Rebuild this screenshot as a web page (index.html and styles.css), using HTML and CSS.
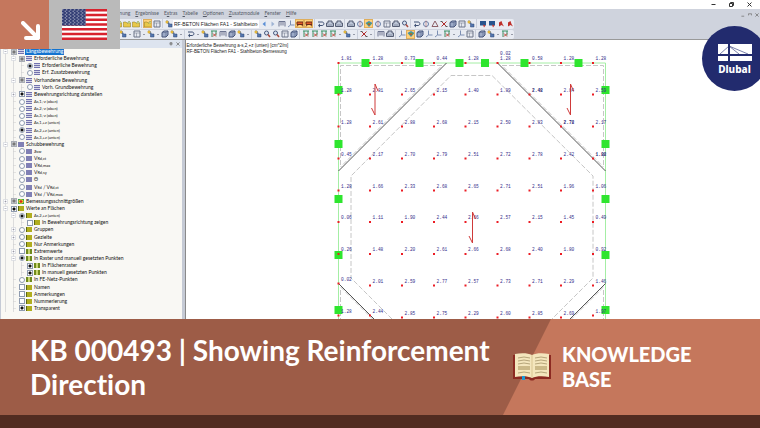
FILE: index.html
```
<!DOCTYPE html>
<html lang="en">
<head>
    <meta charset="UTF-8">
    <meta name="viewport" content="width=device-width, initial-scale=1.0">
    <title>KB 000493 | Showing Reinforcement Direction</title>
    <link rel="stylesheet" href="styles.css">
</head>
<body>
    <svg class="sprite" width="0" height="0" aria-hidden="true">
        <symbol id="folder" viewBox="0 0 16 16"><path d="M1 4h5l2 2h7v8H1z" fill="#e8c84a" stroke="#8a7420"/><path d="M9 7l3-5 3 4" fill="#cfe0a0" stroke="#7b8c30"/></symbol>
        <symbol id="sheet" viewBox="0 0 16 16"><path d="M2 2h12v12H2z" fill="#e6e9f0" stroke="#6c7488" stroke-width="2"/><path d="M2 6h12M7 6v8" stroke="#6c7488"/></symbol>
        <symbol id="cube" viewBox="0 0 16 16"><path d="M2 5l4-3h8v8l-4 4H2z" fill="#9dabc8" stroke="#46547a" stroke-width="2"/><path d="M2 5h8v9M10 5l4-3" fill="none" stroke="#46547a"/></symbol>
        <symbol id="node" viewBox="0 0 16 16"><path d="M2 2h4l3 6h5v6H7V9z" fill="#5477b0" stroke="#2d4573"/><circle cx="4" cy="4" r="3" fill="#e3b63a"/></symbol>
        <symbol id="load" viewBox="0 0 16 16"><path d="M2 13V3h12v10M6 3v8M10 3v8" fill="none" stroke="#6e7590" stroke-width="2"/></symbol>
        <symbol id="rod" viewBox="0 0 16 16"><path d="M2 4h8c5 0 5 7 0 7H4" fill="none" stroke="#3e5074" stroke-width="2"/><path d="M6 7l-4 4 4 4" fill="#3e5074"/></symbol>
        <symbol id="lens" viewBox="0 0 16 16"><circle cx="7" cy="6" r="4" fill="#dce5f2" stroke="#48587c" stroke-width="2"/><path d="M10 9l4 5" stroke="#a8483c" stroke-width="3"/></symbol>
        <symbol id="bars" viewBox="0 0 16 16"><path d="M2 2h12M4 2v12M12 2v9" stroke="#3c9166" stroke-width="2"/><path d="M6 7l6 6M12 7l-6 6" stroke="#c24436" stroke-width="2"/></symbol>
        <symbol id="cross" viewBox="0 0 16 16"><path d="M3 3l10 10M13 3L3 13" stroke="#b02c2c" stroke-width="2"/><path d="M1 3h4M11 13h4" stroke="#555" stroke-width="2"/></symbol>
        <symbol id="axis" viewBox="0 0 16 16"><path d="M7 1v9h8M7 10l-5 4" fill="none" stroke="#7c8fb3" stroke-width="2"/></symbol>
        <symbol id="print" viewBox="0 0 16 16"><path d="M4 2h8v4h3v7H1V6h3z" fill="#bcc5d6" stroke="#565e74" stroke-width="2"/><path d="M3 10h10" stroke="#565e74"/></symbol>
        <symbol id="truss" viewBox="0 0 16 16"><path d="M2 4h12v5H2zM5 9l-3 4M11 9l3 4" fill="#e05a28" stroke="#6b2a18" stroke-width="2"/></symbol>
        <symbol id="rainbow" viewBox="0 0 16 16"><path d="M1 6l7-4 7 4-7 8z" fill="#3d7fd0"/><path d="M3 7l5-3 5 3-5 5z" fill="#52b94d"/><path d="M5 7h6l-3 4z" fill="#d8382c"/></symbol>
        <symbol id="doc" viewBox="0 0 16 16"><path d="M2 2h12v9H2z" fill="#27548e"/><path d="M8 9l5 2-3 4z" fill="#c8362c"/></symbol>
        <symbol id="pdf" viewBox="0 0 16 16"><path d="M4 13V5l5-3 2 6 3 5-5-3z" fill="#bf2f2a"/></symbol>
        <symbol id="ring" viewBox="0 0 16 16"><circle cx="8" cy="8" r="5" fill="none" stroke="#6a80a8" stroke-width="2"/><path d="M8 1v14" stroke="#b8574c"/></symbol>
        <symbol id="prev" viewBox="0 0 16 16"><path d="M11 3L5 8l6 5z" fill="#5b8fd6"/></symbol>
        <symbol id="next" viewBox="0 0 16 16"><path d="M5 3l6 5-6 5z" fill="#9fb4d4"/></symbol>
        <symbol id="tri" viewBox="0 0 16 16"><path d="M8 2l6 11H2z" fill="none" stroke="#8c5f66" stroke-width="2"/></symbol>
        <symbol id="drop" viewBox="0 0 8 16"><path d="M2 8h4L4 10z" fill="#444b5c"/></symbol>
    </svg>

    <main class="app">
        <header class="title-bar">
            <button class="win-btn" aria-label="Minimize"><svg viewBox="0 0 10 10"><path d="M1 5h8"/></svg></button>
            <button class="win-btn" aria-label="Restore"><svg viewBox="0 0 10 10"><path d="M1 3h6v6H1zM3 3V1h6v6H7"/></svg></button>
            <button class="win-btn" aria-label="Close"><svg viewBox="0 0 10 10"><path d="M1 1l8 8M9 1L1 9"/></svg></button>
        </header>
        <nav class="menu-bar">
            <a href="#">Berechnung</a>
            <a href="#"><u>E</u>rgebnisse</a>
            <a href="#">E<u>x</u>tras</a>
            <a href="#"><u>T</u>abelle</a>
            <a href="#"><u>O</u>ptionen</a>
            <a href="#"><u>Z</u>usatzmodule</a>
            <a href="#"><u>F</u>enster</a>
            <a href="#"><u>H</u>ilfe</a>
            <span class="doc-controls">
                <button class="doc-btn" aria-label="Minimize document"><svg viewBox="0 0 10 10"><path d="M1 8h7"/></svg></button>
                <button class="doc-btn" aria-label="Restore document"><svg viewBox="0 0 10 10"><path d="M1 6V2h8v4"/></svg></button>
                <button class="doc-btn" aria-label="Close document"><svg viewBox="0 0 10 10"><path d="M1 1l8 8M9 1L1 9"/></svg></button>
            </span>
        </nav>
        <div class="toolbars">
            <div class="toolbar" id="toolbar-main"></div>
            <div class="toolbar" id="toolbar-view"></div>
        </div>

        <div class="workspace">
            <aside class="navigator">
                <div class="navigator-head">
                    <button class="pane-btn" aria-label="Pin"><svg viewBox="0 0 10 10"><path d="M3 1h4v4H3zM1 5h8M5 5v4"/></svg></button>
                    <button class="pane-btn" aria-label="Close pane"><svg viewBox="0 0 10 10"><path d="M1 1l8 8M9 1L1 9"/></svg></button>
                </div>
                <div class="tree" id="tree"></div>
            </aside>
            <section class="view">
                <svg class="plot" id="plot" viewBox="0 0 1148 558" preserveAspectRatio="xMidYMin slice">
                    <text class="caption" x="1" y="13">Erforderliche Bewehrung a-s,2,+z (unten) [cm^2/m]</text>
                    <text class="caption" x="1" y="25">RF-BETON Flächen FA1 - Stahlbeton-Bemessung</text>
                    <path class="edge" d="M305 558V46H839V558"/>
                    <path class="dashed" d="M309 250V51H512L309 254M835 250V51H632L835 254M309 500V558M835 500V558M309 494L373 558M835 494L771 558"/>
                    <path class="dashed" d="M412 558L330 476V272L530 71H612L814 272V476L732 558"/>
                    <path class="joint" d="M521 46L305 262M623 46L839 262M305 487L376 558M839 487L768 558"/>
                    <g id="supports"></g>
                    <g id="values"></g>
                    <path class="direction" d="M378 150V88L384 102M378 150L371 136M769 150V88L775 102M769 150L762 136M573 406V344L579 358M573 406L566 392"/>
                </svg>
            </section>
        </div>

        <div class="tags">
            <div class="tag-arrow">
                <svg viewBox="0 0 20 20"><path d="M2 2L17 17M17 5V17H5"/></svg>
            </div>
            <div class="tag-flag">
                <svg viewBox="0 0 57 39" preserveAspectRatio="none">
                    <defs><pattern id="stars" width="5" height="4" patternUnits="userSpaceOnUse"><circle cx="1" cy="1" r="0.7" fill="#fff"/><circle cx="4" cy="3" r="0.7" fill="#fff"/></pattern></defs>
                    <path d="M0 0h57v39H0z" fill="#fff"/>
                    <path d="M0 0h57v3H0zM0 6h57v3H0zM0 12h57v3H0zM0 18h57v3H0zM0 24h57v3H0zM0 30h57v3H0zM0 36h57v3H0z" fill="#d8222e"/>
                    <path d="M0 0h30v21H0z" fill="#2f3a72"/>
                    <path d="M0 0h30v21H0z" fill="url(#stars)"/>
                </svg>
            </div>
        </div>

        <div class="logo">
            <svg viewBox="0 0 34 17">
                <path d="M0 0h34v17H0z" fill="#fff"/>
                <path d="M0 11h34M11 0v17" stroke="#222b6e" stroke-width="2"/>
                <path d="M11 2L2 10M11 2l10 8M11 2l19 8" fill="none" stroke="#222b6e" stroke-width="0.6"/>
            </svg>
            <span>Dlubal</span>
        </div>
    </main>

    <footer class="banner">
        <h1>KB 000493 | Showing Reinforcement Direction</h1>
        <div class="category">
            <svg class="book" viewBox="0 0 38 28">
                <path d="M0 2h38v24H22c-1 2-5 2-6 0H0z" fill="#8c2a22"/>
                <path d="M2 1c6-1 13-1 17 1 4-2 11-2 17-1v23c-6-1-13-1-17 1-4-2-11-2-17-1z" fill="#f4e6bd"/>
                <path d="M19 2v22" stroke="#d9c592"/>
                <path d="M5 5q6-2 12 0M5 8q6-2 12 0M5 11q6-2 12 0M5 20q6-2 12 0M22 5q6-2 12 0M22 8q6-2 12 0M22 11q6-2 12 0M22 20q6-2 12 0" fill="none" stroke="#b5a57a"/>
                <path d="M5 13h12v4H5zM22 13h12v4H22z" fill="#cbb988"/>
                <path d="M9 23h3v4H9z" fill="#1b9ad6"/>
            </svg>
            <p>KNOWLEDGE BASE</p>
        </div>
    </footer>
    <div class="base-strip"></div>

    <script src="script.js"></script>
</body>
</html>
```
FILE: styles.css
```
* {
    box-sizing: border-box;
}
body {
    margin: 0;
    min-height: 100vh;
    display: flex;
    flex-direction: column;
    font-family: "Liberation Sans", Arial, sans-serif;
    overflow: hidden;
}
button {
    border: 0;
    padding: 0;
    background: none;
    display: flex;
    align-items: center;
    justify-content: center;
}
.sprite {
    position: absolute;
}
.app {
    flex: 1;
    display: flex;
    flex-direction: column;
    position: relative;
    background: #fff;
}

/* window frame */
.title-bar {
    height: 9px;
    display: flex;
    justify-content: flex-end;
    align-items: center;
    gap: 13px;
    padding-right: 8px;
}
.win-btn svg, .doc-btn svg, .pane-btn svg {
    display: block;
    width: 5px;
    height: 5px;
    fill: none;
    stroke: #333;
    stroke-width: 2;
}
.doc-btn svg, .pane-btn svg {
    width: 4px;
    height: 4px;
    stroke: #777;
}
.menu-bar {
    height: 9px;
    display: flex;
    align-items: center;
    gap: 5px;
    padding-left: 104px;
    background: #cfd3dd;
    font-family: Lato, sans-serif;
    font-size: 5px;
    line-height: 9px;
}
.menu-bar a {
    color: #555a66;
    text-decoration: none;
}
.doc-controls {
    margin-left: auto;
    display: flex;
    gap: 3px;
    padding: 3px 1px 0 0;
}

/* toolbars */
.toolbars {
    display: flex;
    flex-direction: column;
    align-items: flex-start;
    gap: 1px;
    height: 22px;
    padding-top: 1px;
    background: #cfd3dd;
    border-bottom: 1px solid #999;
}
.toolbar {
    height: 10px;
    display: flex;
    align-items: center;
    background: #e8ebf2;
    border-radius: 0 2px 2px 0;
    padding-left: 113px;
}
#toolbar-view {
    padding-left: 118px;
}
.tool-group {
    display: flex;
    align-items: center;
}
.tool-group + .tool-group {
    border-left: 1px solid #c9ceda;
    margin-left: 1px;
    padding-left: 1px;
}
.tool {
    width: 9px;
    height: 9px;
}
.tool svg {
    width: 8px;
    height: 8px;
}
.tool.active {
    background: #ffd27a;
    outline: 1px solid #dfae5c;
    outline-offset: -1px;
}
.tool.drop {
    width: 5px;
}
.tool.drop svg {
    width: 4px;
}
.case-select {
    appearance: none;
    width: 86px;
    height: 8px;
    border: 0;
    border-radius: 0;
    padding: 0 1px;
    background: #fff;
    font-family: "Liberation Sans", Arial, sans-serif;
    font-size: 5px;
    color: #222;
}

/* navigator pane */
.workspace {
    flex: 1;
    display: flex;
}
.navigator {
    width: 185px;
    display: flex;
    flex-direction: column;
    border-right: 3px solid #c5cad5;
    border-left: 1px solid #c5cad5;
    background: #f9f8f4;
}
.navigator-head {
    height: 8px;
    display: flex;
    align-items: center;
    justify-content: flex-end;
    gap: 3px;
    padding-right: 2px;
    background: #dde4ef;
}
.tree {
    flex: 1;
    display: grid;
    grid-auto-rows: 1fr;
    padding-bottom: 7px;
}
.row {
    display: flex;
    align-items: center;
    min-height: 0;
    line-height: 7px;
    font-family: Lato, sans-serif;
    font-size: 5px;
    color: #111;
    background: repeating-linear-gradient(90deg, transparent 0 4px, #dcdcdc 4px 5px, transparent 5px 8px) no-repeat;
}
.level-0 {
    padding-left: 2px;
    background-size: 8px 100%;
}
.level-1 {
    padding-left: 10px;
    background-size: 16px 100%;
}
.level-2 {
    padding-left: 18px;
    background-size: 24px 100%;
}
.row label {
    display: flex;
    align-items: center;
}
.row label span {
    padding: 0 1px;
    white-space: nowrap;
}
.row small {
    font-size: 4px;
}
.row.selected span {
    background: #1373cf;
    color: #fff;
}
.toggle {
    width: 5px;
    height: 5px;
    margin-right: 3px;
}
.toggle svg {
    display: block;
    width: 5px;
    height: 5px;
}
.row input {
    appearance: none;
    flex: none;
    width: 6px;
    height: 6px;
    margin: 0 1px 0 0;
    border: 1px solid #8f9cb0;
    background: #fff;
}
.row input[type="radio"] {
    border-radius: 50%;
}
.row input:checked {
    background: radial-gradient(#111 0 1px, #fff 2px);
}
.row input.mixed {
    background: radial-gradient(#777 0 1px, #c4c6ca 2px);
    border-color: #a9adb5;
}
.swatch {
    flex: none;
    width: 6px;
    height: 5px;
    margin-right: 1px;
}
.swatch-bars {
    background: linear-gradient(#7272ae 0 1px, #d5d5e6 1px 2px, #7272ae 2px 3px, #d5d5e6 3px 4px, #7272ae 4px 5px);
}
.swatch-block {
    background: #8080b5;
}
.swatch-area {
    background: #b0ad1e;
    border-left: 1px solid #5e6a14;
}
.swatch-mesh {
    background: linear-gradient(90deg, #6f8a1c 0 2px, #c7d470 2px 4px, #6f8a1c 4px 6px);
}
.swatch-heat {
    background: radial-gradient(#d8281c 0 1px, #f0dc28 2px, #34a14c 3px);
}

/* result view */
.view {
    flex: 1;
    min-width: 0;
    position: relative;
    border-left: 1px solid #8a8a8a;
}
.plot {
    position: absolute;
    inset: 0;
    width: 100%;
    height: 100%;
}
.caption {
    font-size: 9px;
    fill: #222;
}
.value {
    font-family: "Liberation Mono", monospace;
    font-size: 9px;
    fill: #352d8a;
}
.value.strong {
    font-weight: bold;
    fill: #1d1a70;
}
.edge {
    fill: none;
    stroke: #a4eea4;
    stroke-width: 2;
}
.dashed {
    fill: none;
    stroke: #c6c6c6;
    stroke-width: 2;
    stroke-dasharray: 10 4;
}
.joint {
    stroke: #555;
    stroke-width: 2;
}
.support {
    fill: #2ee52e;
}
.dot {
    fill: #ec1c24;
}
.direction {
    fill: none;
    stroke: #cf3a3a;
    stroke-width: 2;
}

/* overlays */
.tags {
    position: absolute;
    top: 0;
    left: 0;
    display: flex;
    height: 49px;
}
.tag-arrow {
    width: 49px;
    padding: 21px 0 0 21px;
    background: #c5775d;
}
.tag-arrow svg {
    display: block;
    width: 20px;
    height: 20px;
    fill: none;
    stroke: #fff;
    stroke-width: 4;
    stroke-linecap: round;
    stroke-linejoin: round;
}
.tag-flag {
    width: 71px;
    padding: 9px 13px;
    background: #bababa;
}
.tag-flag svg {
    display: block;
    width: 45px;
    height: 31px;
}
.logo {
    position: absolute;
    top: 26px;
    right: -7px;
    width: 65px;
    height: 65px;
    padding-top: 18px;
    border-radius: 50%;
    background: #222b6e;
    color: #fff;
    text-align: center;
    font-family: "Noto Sans", sans-serif;
    font-size: 10px;
    font-weight: 800;
    line-height: 16px;
}
.logo svg {
    display: block;
    width: 34px;
    height: 17px;
    margin: 0 auto;
}

/* banner */
.banner {
    display: flex;
    min-height: 96px;
    background: #9d5c47;
    color: #fff;
    font-family: Lato, sans-serif;
    font-variant-ligatures: none;
}
.banner h1 {
    flex: 1;
    align-self: center;
    margin: 0;
    padding-left: 30px;
    font-size: 28px;
    font-weight: 700;
    line-height: 34px;
}
.category {
    width: 257px;
    display: flex;
    align-items: center;
    gap: 11px;
    padding: 0 30px 0 10px;
    position: relative;
}
.category::before {
    content: "";
    position: absolute;
    inset: 0;
    background: #c5775c;
    clip-path: polygon(48px 0, 100% 0, 100% 100%, 0 100%);
}
.book {
    position: relative;
    flex: none;
    width: 38px;
    height: 28px;
}
.category p {
    position: relative;
    margin: 0;
    font-size: 20px;
    font-weight: 900;
    line-height: 25px;
}
.base-strip {
    height: 13px;
    background: #522c21;
}
```
FILE: script.js
```
const use = id => `<svg><use href="#${id}"/></svg>`;

// "*" marks a pressed button, "select" is the load case list
const mainTools = [
    "folder folder folder",
    "folder* sheet",
    "node select prev next load axis truss* truss*",
    "rod print print",
    "print ring rainbow* ring sheet print lens",
    "rod ring tri cross cube sheet node",
    "doc doc pdf pdf"
];
const viewTools = [
    "node drop sheet drop node drop cube node drop",
    "rod drop node bars load cube node drop",
    "node lens lens sheet cube",
    "bars bars bars bars drop node drop",
    "cross drop",
    "load print",
    "axis rainbow* cube axis axis bars drop axis sheet",
    "cube node drop bars drop"
];

const caseSelect = `<select class="case-select" aria-label="Load case">
    <option>RF-BETON Flächen FA1 - Stahlbeton-B</option></select>`;

function buildToolbar(id, groups) {
    document.getElementById(id).innerHTML = groups.map(group => {
        const items = group.split(" ").map(item => {
            if (item === "select") return caseSelect;
            const name = item.replace("*", "");
            const active = item.endsWith("*") ? " active" : "";
            const drop = name === "drop" ? " drop" : "";
            return `<button class="tool${active}${drop}" aria-label="${name}">${use(name)}</button>`;
        });
        return `<div class="tool-group">${items.join("")}</div>`;
    }).join("");
}

// level, toggle, control, swatch, label
const rows = [
    [0, "-", "mixed", "bars", "Längsbewehrung"],
    [1, "-", "mixed", "bars", "Erforderliche Bewehrung"],
    [2, "", "radio on", "bars", "Erforderliche Bewehrung"],
    [2, "", "radio", "bars", "Erf. Zusatzbewehrung"],
    [1, "-", "mixed", "bars", "Vorhandene Bewehrung"],
    [2, "", "radio", "bars", "Vorh. Grundbewehrung"],
    [1, "+", "check on", "bars", "Bewehrungsrichtung darstellen"],
    [1, "", "radio", "bars", "<small>As,1,-z (oben)</small>"],
    [1, "", "radio", "bars", "<small>As,2,-z (oben)</small>"],
    [1, "", "radio", "bars", "<small>As,3,-z (oben)</small>"],
    [1, "", "radio", "bars", "<small>As,1,+z (unten)</small>"],
    [1, "", "radio on", "bars", "<small>As,2,+z (unten)</small>"],
    [1, "", "radio", "bars", "<small>As,3,+z (unten)</small>"],
    [0, "-", "mixed", "block", "Schubbewehrung"],
    [1, "", "radio", "block", "a<small>sw</small>"],
    [1, "", "radio", "block", "V<small>Rd,ct</small>"],
    [1, "", "radio", "block", "V<small>Rd,max</small>"],
    [1, "", "radio", "block", "V<small>Rd,sy</small>"],
    [1, "", "radio", "block", "Θ"],
    [1, "", "radio", "block", "V<small>Ed</small> / V<small>Rd,ct</small>"],
    [1, "", "radio", "block", "V<small>Ed</small> / V<small>Rd,max</small>"],
    [0, "+", "mixed", "heat", "Bemessungsschnittgrößen"],
    [0, "-", "check on", "area", "Werte an Flächen"],
    [1, "-", "radio on", "area", "<small>As,2,+z (unten)</small>"],
    [2, "", "check", "area", "In Bewehrungsrichtung zeigen"],
    [1, "+", "radio", "area", "Gruppen"],
    [1, "+", "radio", "area", "Gezielte"],
    [1, "", "radio", "area", "Nur Anmerkungen"],
    [1, "+", "check", "mesh", "Extremwerte"],
    [1, "-", "radio on", "mesh", "In Raster und manuell gesetzten Punkten"],
    [2, "", "check on", "mesh", "In Flächenraster"],
    [2, "", "check on", "mesh", "In manuell gesetzten Punkten"],
    [1, "", "radio", "mesh", "In FE-Netz-Punkten"],
    [1, "", "check", "area", "Namen"],
    [1, "", "check", "area", "Anmerkungen"],
    [1, "", "check", "area", "Nummerierung"],
    [1, "", "check on", "area", "Transparent"]
];

function toggleIcon(kind) {
    const box = '<path d="M1 1h8v8H1z" fill="#fff" stroke="#c5c9d2"/>';
    const sign = kind === "+" ? "M3 5h4M5 3v4" : "M3 5h4";
    const stub = '<path d="M4 5h6" stroke="#ccc"/>';
    const shape = kind ? `${box}<path d="${sign}" stroke="#778"/>` : stub;
    return `<svg viewBox="0 0 10 10">${shape}</svg>`;
}

document.getElementById("tree").innerHTML = rows.map(([level, toggle, control, swatch, text], i) => {
    const type = control.startsWith("radio") ? "radio" : "checkbox";
    const checked = control.endsWith("on") ? "checked" : "";
    const mixed = control === "mixed" ? "mixed" : "";
    const tag = toggle ? "button" : "div";
    return `<div class="row level-${level}${i === 0 ? " selected" : ""}">
        <${tag} class="toggle">${toggleIcon(toggle)}</${tag}>
        <label for="item-${i}"><input type="${type}" id="item-${i}" class="${mixed}" ${checked}>
        <i class="swatch swatch-${swatch}"></i><span>${text}</span></label>
    </div>`;
}).join("");

// reinforcement values on the 9 x 9 raster, "!" is drawn bold
const cols = [305, 368, 432, 496, 559, 623, 687, 750, 814];
const lines = [46, 109, 173, 237, 301, 364, 428, 491, 555];
const values = [
    "1.81 1.28 0.73 0.44 1.28 1.28 0.58 1.28 1.28",
    "1.28 2.81 2.65 2.15 1.40 1.89 2.48! 2.84 2.59",
    "1.28 2.61 2.88 2.68 2.15 2.50 2.83 2.78! 2.17",
    "0.45 2.17 2.70 2.79 2.51 2.72 2.78 2.42 1.88!",
    "1.28 1.66 2.33 2.68 2.65 2.71 2.51 1.96 1.06",
    "0.06 1.11 1.90 2.44 2.66 2.57 2.15 1.45 0.49",
    "0.26 1.48 2.20 2.61 2.66 2.68 2.40 1.80 0.92",
    "0.02 2.01 2.59 2.77 2.57 2.73 2.71 2.29 1.46",
    "1.28 2.44 2.85 2.75 2.29 2.60 2.85 2.69 1.97"
];
// raster points moved onto the plate edge
const moved = { "7-0": 487, "8-0": 551, "8-1": 551, "8-8": 551 };

let marks = '<text class="value" x="628" y="29">0.02</text>';
values.forEach((line, r) => {
    line.split(" ").forEach((value, c) => {
        const x = cols[c];
        const y = moved[`${r}-${c}`] || lines[r];
        const strong = value.endsWith("!") ? " strong" : "";
        marks += `<rect class="dot" x="${x - 2}" y="${y - 2}" width="4" height="4"/>
            <text class="value${strong}" x="${x + 5}" y="${y - 6}">${value.replace("!", "")}</text>`;
    });
});
document.getElementById("values").innerHTML = marks;

const supports = [359, 467, 547, 598, 677, 785].map(x => [x, 46]);
[100, 208, 318, 430, 540].forEach(y => supports.push([305, y], [839, y]));
document.getElementById("supports").innerHTML = supports
    .map(([x, y]) => `<rect class="support" x="${x - 8}" y="${y - 8}" width="16" height="16"/>`)
    .join("");

buildToolbar("toolbar-main", mainTools);
buildToolbar("toolbar-view", viewTools);
```
